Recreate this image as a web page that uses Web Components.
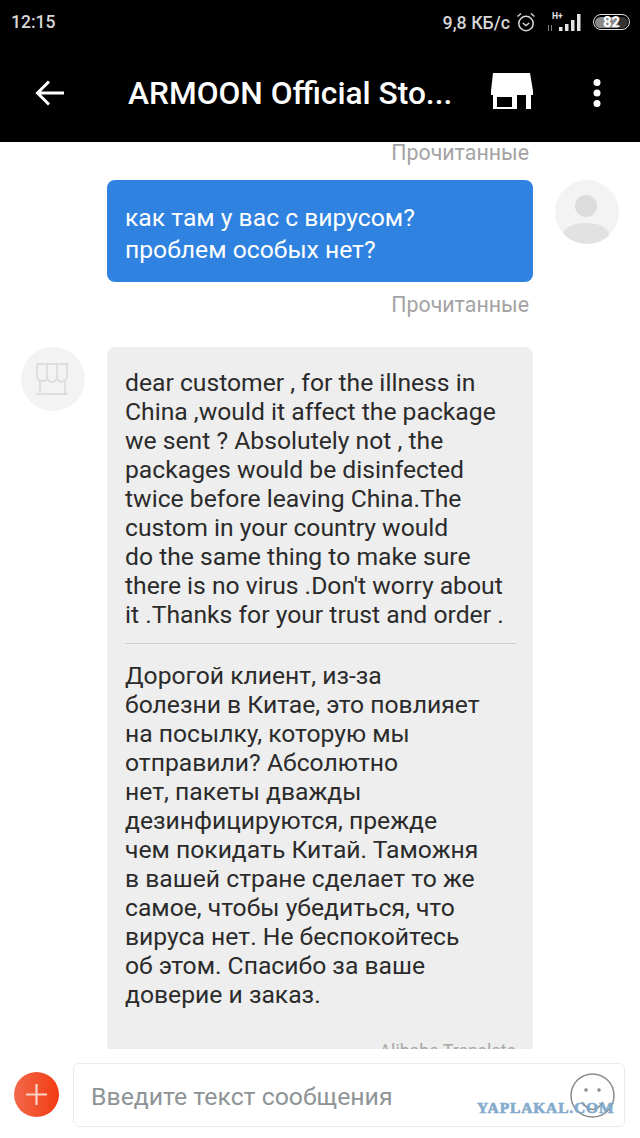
<!DOCTYPE html>
<html lang="ru">
<head>
<meta charset="utf-8">
<title>ARMOON Official Store</title>
<style>
  html, body { margin: 0; padding: 0; background: #fff; }
  body { width: 640px; height: 1138px; overflow: hidden; font-family: Roboto, "Noto Sans", sans-serif; }
</style>
</head>
<body>
<chat-screen>
  <status-bar slot="status"></status-bar>
  <app-bar slot="bar" title="ARMOON Official Sto..."></app-bar>

  <read-mark>Прочитанные</read-mark>
  <chat-row side="me" style="margin-top:15px">
    <chat-bubble tone="blue">как там у вас с вирусом?<br>проблем особых нет?</chat-bubble>
  </chat-row>
  <read-mark style="margin-top:12px">Прочитанные</read-mark>
  <chat-row side="store" style="margin-top:30px">
    <chat-bubble tone="grey">
      dear customer , for the illness in<br>China ,would it affect the package<br>we sent ? Absolutely not , the<br>packages would be disinfected<br>twice before leaving China.The<br>custom in your country would<br>do the same thing to make sure<br>there is no virus .Don't worry about<br>it .Thanks for your trust and order .
      <div slot="translation">Дорогой клиент, из-за<br>болезни в Китае, это повлияет<br>на посылку, которую мы<br>отправили? Абсолютно<br>нет, пакеты дважды<br>дезинфицируются, прежде<br>чем покидать Китай. Таможня<br>в вашей стране сделает то же<br>самое, чтобы убедиться, что<br>вируса нет. Не беспокойтесь<br>об этом. Спасибо за ваше<br>доверие и заказ.</div>
      <span slot="credit">Alibaba Translate</span>
    </chat-bubble>
  </chat-row>

  <message-input slot="input"></message-input>
</chat-screen>

<script>
(function () {
  class ChatScreen extends HTMLElement {
    constructor() {
      super();
      this.attachShadow({ mode: "open" });
      this.shadowRoot.innerHTML = `
      <style>
        :host{ display:flex; flex-direction:column; width:640px; height:1138px; background:#fff; position:relative; overflow:hidden; }
        .top{ background:#000; height:142px; flex:none; display:flex; flex-direction:column; }
        .list{ height:907px; flex:none; overflow:hidden; display:flex; flex-direction:column; }
        .foot{ flex:1; }
        .mark{
          position:absolute; left:477px; top:1099px;
          font:bold 15.5px "Liberation Serif",serif; letter-spacing:.85px;
          color:#78a4c8; -webkit-text-stroke:.7px #78a4c8; opacity:.9;
        }
      </style>
      <div class="top"><slot name="status"></slot><slot name="bar"></slot></div>
      <div class="list"><slot></slot></div>
      <div class="foot"><slot name="input"></slot></div>
      <div class="mark">YAPLAKAL.COM</div>
      `;
    }
  }

  class StatusBar extends HTMLElement {
    constructor() {
      super();
      this.attachShadow({ mode: "open" });
      this.shadowRoot.innerHTML = `
      <style>
        :host{ display:flex; align-items:center; height:44px; padding:0 10px 0 11px; color:#d6d6d6; font:500 17.8px Roboto,sans-serif; box-sizing:border-box; }
        .time{ flex:1; font-size:17.5px; }
        .speed{ margin-right:6px; }
        svg{ display:block; }
        .sig{ margin:0 10px 0 12px; }
        .batt{
          width:37px; height:16px; box-sizing:border-box; border:1.5px solid #e0e0e0; border-radius:8px;
          display:flex; align-items:center; justify-content:center; padding:1px;
        }
        .batt span{
          background:linear-gradient(90deg,#8a8a8a 0 70%,#333 70%); color:#fff; width:100%; text-align:center;
          border-radius:6px; height:11px; line-height:11px; font-size:15px; font-weight:700;
        }
      </style>
      <span class="time">12:15</span>
      <span class="speed">9,8 КБ/с</span>
      <svg width="20" height="22" viewBox="0 0 20 22" fill="none" stroke="#d6d6d6" stroke-width="1.5">
        <circle cx="10" cy="12.5" r="7.2"/>
        <path d="M6.8 12l3.2 2.6 3.2-2.6" />
        <path d="M1.5 5.5L5 2.5M18.5 5.5L15 2.5"/>
      </svg>
      <svg class="sig" width="35" height="20" viewBox="0 0 35 20" fill="#e4e4e4">
        <text x="4" y="7" font-family="Roboto,sans-serif" font-size="8.5" font-weight="700">H+</text>
        <rect x="0" y="13" width="1" height="6" opacity=".55"/><rect x="3" y="13" width="1" height="6" opacity=".55"/>
        <rect x="11" y="15" width="3.500" height="4"/><rect x="17" y="12" width="3.500" height="7"/>
        <rect x="23" y="8" width="3.500" height="11"/><rect x="29" y="2" width="3.500" height="17"/>
      </svg>
      <div class="batt"><span>82</span></div>
      `;
    }
  }

  class AppBar extends HTMLElement {
    constructor() {
      super();
      this.attachShadow({ mode: "open" });
      this.shadowRoot.innerHTML = `
      <style>
        :host{ display:flex; align-items:center; height:98px; color:#fff; box-sizing:border-box; }
        .back{ width:128px; flex:none; padding-left:35px; box-sizing:border-box; }
        .title{ width:363px; flex:none; font:500 31.7px Roboto,sans-serif; white-space:nowrap; }
        .shop{ width:101px; flex:none; margin-top:-4px; }
        .more{ flex:none; }
        svg{ display:block; }
      </style>
      <div class="back">
        <svg width="30" height="30" viewBox="0 0 30 30" fill="none" stroke="#fff" stroke-width="3">
          <path d="M29 15H3M14 3.5L2.5 15 14 26.500"/>
        </svg>
      </div>
      <div class="title">${this.getAttribute("title")}</div>
      <div class="shop">
        <svg width="42" height="36" viewBox="0 0 42 36" fill="#fff">
          <path d="M2 0h37l3 18v4H0v-4z"/>
          <path fill-rule="evenodd" d="M2 22h38v14H2zM6 24v10h15V24zM26 22v14h9V22z"/>
        </svg>
      </div>
      <div class="more">
        <svg width="10" height="30" viewBox="0 0 10 30" fill="#fff">
          <circle cx="5" cy="4.500" r="3.500"/><circle cx="5" cy="15" r="3.500"/><circle cx="5" cy="25.500" r="3.500"/>
        </svg>
      </div>
      `;
    }
  }

  class ReadMark extends HTMLElement {
    constructor() {
      super();
      this.attachShadow({ mode: "open" });
      this.shadowRoot.innerHTML = `
      <style>
        :host{ display:block; flex:none; text-align:right; padding:0 111px 2px 0; color:#a3a3a3; font:400 21.4px/21px Roboto,sans-serif; }
      </style>
      <slot></slot>
      `;
    }
  }

  class ChatRow extends HTMLElement {
    constructor() {
      super();
      this.attachShadow({ mode: "open" });
      const side = this.getAttribute("side");
      const icon = side === "me"
        ? `<svg width="66" height="66" viewBox="0 0 66 66">
             <defs><clipPath id="c"><circle cx="33" cy="33" r="32"/></clipPath></defs>
             <circle cx="33" cy="33" r="32" fill="#f3f3f3"/>
             <circle cx="32" cy="27" r="11" fill="#dcdcdc"/>
             <ellipse cx="32" cy="55" rx="23" ry="11" fill="#e2e2e2" clip-path="url(#c)"/>
           </svg>`
        : `<svg width="64" height="64" viewBox="0 0 64 64">
             <circle cx="32" cy="32" r="32" fill="#f3f3f3"/>
             <path d="M16 17h30v14M16 17v14M26 17v16M36 17v16M16 31q5 6 10 1q5 6 10 0q5 6 10 -1M19 33v14h25V33M15 47h32" fill="none" stroke="#dedede" stroke-width="2"/>
           </svg>`;
      this.shadowRoot.innerHTML = `
      <style>
        :host{ display:flex; flex:none; align-items:flex-start; padding-left:${side === "me" ? 107 : 21}px; gap:${side === "me" ? 21 : 22}px; }
        .a{ flex:none; ${side === "me" ? "margin-top:-1px;" : ""} }
        svg{ display:block; }
      </style>
      ${side === "me" ? "<slot></slot>" : ""}
      <div class="a">${icon}</div>
      ${side === "me" ? "" : "<slot></slot>"}
      `;
    }
  }

  class ChatBubble extends HTMLElement {
    constructor() {
      super();
      this.attachShadow({ mode: "open" });
      const blue = this.getAttribute("tone") === "blue";
      this.shadowRoot.innerHTML = `
      <style>
        :host{
          display:block; flex:none; width:426px; box-sizing:border-box;
          border-radius:8px;
          background:${blue ? "#2f82e0" : "#eeeeee"};
          color:${blue ? "#fff" : "#2b2b2b"};
          padding:${blue ? "22px 18px 16px" : "21px 17px 0 18px"};
          font:400 24.7px/${blue ? 32 : 29}px Roboto,sans-serif;
          white-space:nowrap;
        }
        .tr{ ${blue ? "display:none;" : ""} border-top:1px solid #cfcfcf; margin-top:14px; padding-top:17px; }
        .credit{ ${blue ? "display:none;" : ""} margin-top:32px; text-align:right; font-size:17.7px; line-height:20px; color:#a8a8a8; }
      </style>
      <slot></slot>
      <div class="tr"><slot name="translation"></slot></div>
      <div class="credit"><slot name="credit"></slot></div>
      `;
    }
  }

  class MessageInput extends HTMLElement {
    constructor() {
      super();
      this.attachShadow({ mode: "open" });
      this.shadowRoot.innerHTML = `
      <style>
        :host{ display:flex; align-items:flex-start; height:89px; padding:14px 0 0 14px; box-sizing:border-box; gap:14px; }
        .plus{ width:45px; height:45px; flex:none; margin-top:9px; }
        .box{
          width:552px; height:64px; box-sizing:border-box; flex:none;
          border:1px solid #ececec; border-radius:6px; background:#fff;
          display:flex; align-items:center; justify-content:space-between;
          padding:0 9px 0 17px;
          font:400 24.8px Roboto,sans-serif; color:#8e9496;
        }
        .box span{ padding-top:2px; }
        svg{ display:block; }
      </style>
      <div class="plus">
        <svg width="45" height="45" viewBox="0 0 45 45">
          <defs><linearGradient id="g" x1="0" x2="1" y1="0" y2="0"><stop offset="0" stop-color="#f2694a"/><stop offset="1" stop-color="#f23b12"/></linearGradient></defs>
          <circle cx="22.500" cy="22.500" r="22.500" fill="url(#g)"/>
          <path d="M22.500 12v21M12 22.500h21" stroke="#fbd5c8" stroke-width="2.200"/>
        </svg>
      </div>
      <div class="box">
        <span>Введите текст сообщения</span>
        <svg width="45" height="45" viewBox="0 0 45 45" fill="none" stroke="#8a8a8a" stroke-width="1.500">
          <circle cx="22.500" cy="22.500" r="21.500"/>
          <circle cx="16" cy="17" r="1.800" fill="#8a8a8a" stroke="none"/><circle cx="29" cy="17" r="1.800" fill="#8a8a8a" stroke="none"/>
          <path d="M12 29q10.500 15 21 0"/>
        </svg>
      </div>
      `;
    }
  }

  customElements.define("chat-screen", ChatScreen);
  customElements.define("status-bar", StatusBar);
  customElements.define("app-bar", AppBar);
  customElements.define("read-mark", ReadMark);
  customElements.define("chat-row", ChatRow);
  customElements.define("chat-bubble", ChatBubble);
  customElements.define("message-input", MessageInput);
})();
</script>
</body>
</html>
